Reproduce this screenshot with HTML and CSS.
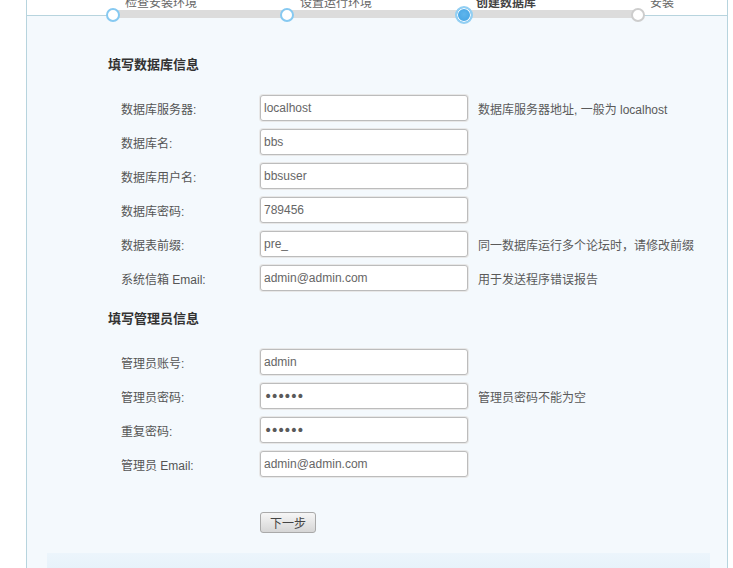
FILE: index.html
```html
<!DOCTYPE html>
<html lang="zh-CN">
<head>
<meta charset="utf-8">
<title>安装 - 创建数据库</title>
<link rel="stylesheet" href="styles.css">
</head>
<body>
<div class="wrap">
  <div class="steps">
    <div class="bar"></div>
    <i class="dot d1"></i><span class="lbl l1">检查安装环境</span>
    <i class="dot d2"></i><span class="lbl l2">设置运行环境</span>
    <i class="dot d3 active"></i><span class="lbl l3 cur">创建数据库</span>
    <i class="dot d4 todo"></i><span class="lbl l4">安装</span>
  </div>
  <div class="main">
    <h3 class="title">填写数据库信息</h3>
    <div class="form first">
      <div class="row"><label class="key">数据库服务器:</label><input class="txt" type="text" value="localhost"><span class="hint">数据库服务器地址, 一般为 localhost</span></div>
      <div class="row"><label class="key">数据库名:</label><input class="txt" type="text" value="bbs"><span class="hint"></span></div>
      <div class="row"><label class="key">数据库用户名:</label><input class="txt" type="text" value="bbsuser"><span class="hint"></span></div>
      <div class="row"><label class="key">数据库密码:</label><input class="txt" type="text" value="789456"><span class="hint"></span></div>
      <div class="row"><label class="key">数据表前缀:</label><input class="txt" type="text" value="pre_"><span class="hint">同一数据库运行多个论坛时，请修改前缀</span></div>
      <div class="row"><label class="key">系统信箱 Email:</label><input class="txt" type="text" value="admin@admin.com"><span class="hint">用于发送程序错误报告</span></div>
    </div>
    <h3 class="title t2">填写管理员信息</h3>
    <div class="form second">
      <div class="row"><label class="key">管理员账号:</label><input class="txt" type="text" value="admin"><span class="hint"></span></div>
      <div class="row"><label class="key">管理员密码:</label><input class="txt pwd" type="password" value="123456"><span class="hint">管理员密码不能为空</span></div>
      <div class="row"><label class="key">重复密码:</label><input class="txt pwd" type="password" value="123456"><span class="hint"></span></div>
      <div class="row"><label class="key">管理员 Email:</label><input class="txt" type="text" value="admin@admin.com"><span class="hint"></span></div>
    </div>
    <div class="actions"><button class="btn" type="button">下一步</button></div>
  </div>
  <div class="foot"></div>
</div>
</body>
</html>
```

FILE: styles.css
```css
html, body {
  margin: 0;
  padding: 0;
  background: #fff;
}
body {
  font: 12px "Liberation Sans", "Noto Sans CJK SC", sans-serif;
  color: #555;
  overflow: hidden;
}
.wrap {
  margin-left: 26px;
  width: 702px;
  box-sizing: border-box;
  border-left: 1px solid #b7d4de;
  border-right: 1px solid #b7d4de;
  min-height: 600px;
  background: #f4f9fd;
}
.steps {
  position: relative;
  height: 15px;
  border-bottom: 1px solid #b7d4de;
  background: #fff;
}
.bar {
  position: absolute;
  left: 85px;
  top: 10px;
  width: 525px;
  height: 8px;
  background: #dcdcdc;
}
.dot {
  position: absolute;
  top: 8px;
  width: 14px;
  height: 14px;
  box-sizing: border-box;
  border-radius: 50%;
  border: 2px solid #86c9f1;
  background: #fff;
}
.d1 { left: 79px; }
.d2 { left: 253px; }
.d3 { left: 428px; }
.d4 { left: 604px; }
.dot.active {
  top: 6px;
  width: 18px;
  height: 18px;
  border: 2px solid #92cff3;
  background: radial-gradient(circle at 50% 45%, #5fb5ec, #3e9fe2);
  box-shadow: inset 0 0 0 1px #fff;
}
.dot.todo {
  border-color: #cdcdcd;
}
.lbl {
  position: absolute;
  top: -4px;
  line-height: 14px;
  white-space: nowrap;
  color: #666;
}
.l1 { left: 98px; }
.l2 { left: 273px; }
.l3 { left: 449px; }
.l4 { left: 623px; }
.lbl.cur {
  font-weight: bold;
  color: #444;
}
.main {
  padding: 39px 0 0 81px;
}
.title {
  margin: 0;
  font-size: 13px;
  line-height: 20px;
  font-weight: bold;
  color: #333;
}
.title.t2 {
  margin-top: 14px;
}
.form {
  margin-top: 16px;
}
.form.second {
  margin-top: 16px;
}
.row {
  display: grid;
  grid-template-columns: 142px 208px auto;
  column-gap: 10px;
  align-items: center;
  height: 34px;
}
.key {
  padding-left: 13px;
  color: #555;
  white-space: nowrap;
}
.txt {
  width: 208px;
  height: 26px;
  box-sizing: border-box;
  margin: 0;
  border: 1px solid #bcbcbc;
  border-radius: 3px;
  padding: 0 3px;
  background: #fff;
  box-shadow: 0 0 0 1px #e8e8e8;
  font: 12px "Liberation Sans", "Noto Sans CJK SC", sans-serif;
  color: #666;
  outline: none;
}
.txt.pwd {
  font-family: "DejaVu Sans", sans-serif;
  font-size: 14px;
  letter-spacing: -1.8px;
  color: #5a5a5a;
}
.hint {
  white-space: nowrap;
  color: #5a5a5a;
}
.actions {
  margin: 31px 0 0 152px;
}
.btn {
  display: block;
  width: 56px;
  height: 21px;
  margin: 0;
  padding: 0;
  border: 1px solid #a9a9a9;
  border-radius: 3px;
  background: linear-gradient(#f6f6f6, #d6d6d6);
  font: 12px "Liberation Sans", "Noto Sans CJK SC", sans-serif;
  color: #444;
}
.foot {
  margin: 20px 0 0 20px;
  width: 663px;
  height: 30px;
  background: linear-gradient(#ecf5fc, #e2eff8);
}
```
